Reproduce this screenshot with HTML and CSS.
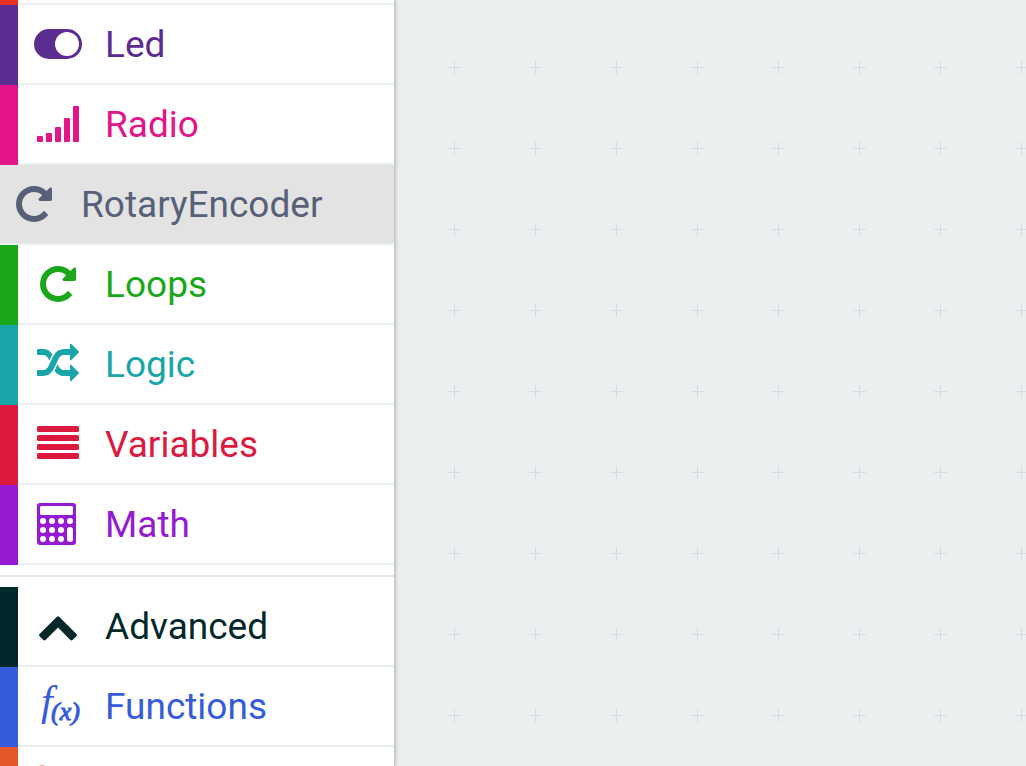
FILE: index.html
```html
<!DOCTYPE html>
<html lang="en">
<head>
  <meta charset="UTF-8">
  <meta name="viewport" content="width=device-width, initial-scale=1.0">
  <title>Block Editor</title>
  <link rel="stylesheet" href="styles.css">
</head>
<body>
  <div id="editor">
    <!-- Toolbox -->
    <nav class="toolbox">
      <div class="row-end input"></div>

      <button type="button" class="category led">
        <svg class="icon wide" viewBox="0 0 48 42"><path fill-rule="evenodd" d="M15 6h18a15 15 0 0 1 0 30H15a15 15 0 0 1 0-30zM33 9a12 12 0 1 0 0 24 12 12 0 0 0 0-24z"/></svg>
        <span>Led</span>
      </button>

      <button type="button" class="category radio">
        <svg class="icon" viewBox="0 0 42 42">
          <rect x="0" y="33" width="6" height="6" rx="1"/>
          <rect x="9" y="30" width="6" height="9" rx="1"/>
          <rect x="18" y="24" width="6" height="15" rx="1"/>
          <rect x="27" y="15" width="6" height="24" rx="1"/>
          <rect x="36" y="3" width="6" height="36" rx="1"/>
        </svg>
        <span>Radio</span>
      </button>

      <button type="button" class="category rotary selected">
        <svg class="icon" viewBox="0 0 1792 1792"><path d="M1664 256v448q0 26-19 45t-45 19h-448q-42 0-59-40-17-39 14-69l138-138q-148-137-349-137-104 0-198.500 40.500t-163.500 109.500-109.500 163.500-40.500 198.500 40.500 198.500 109.500 163.500 163.500 109.500 198.500 40.500q119 0 225-52t179-147q7-10 23-12 15 0 25 9l137 138q9 8 9.500 20.500t-7.500 22.500q-109 132-264 204.500t-327 72.500q-156 0-298-61t-245-164-164-245-61-298 61-298 164-245 245-164 298-61q147 0 284.500 55.500t244.500 156.500l130-129q29-31 70-14 39 17 39 59z"/></svg>
        <span>RotaryEncoder</span>
      </button>

      <button type="button" class="category loops">
        <svg class="icon" viewBox="0 0 1792 1792"><path d="M1664 256v448q0 26-19 45t-45 19h-448q-42 0-59-40-17-39 14-69l138-138q-148-137-349-137-104 0-198.500 40.500t-163.500 109.500-109.500 163.500-40.500 198.500 40.500 198.500 109.500 163.500 163.500 109.500 198.500 40.500q119 0 225-52t179-147q7-10 23-12 15 0 25 9l137 138q9 8 9.500 20.500t-7.500 22.500q-109 132-264 204.500t-327 72.500q-156 0-298-61t-245-164-164-245-61-298 61-298 164-245 245-164 298-61q147 0 284.500 55.500t244.500 156.500l130-129q29-31 70-14 39 17 39 59z"/></svg>
        <span>Loops</span>
      </button>

      <button type="button" class="category logic">
        <svg class="icon" viewBox="0 0 1792 1792"><path d="M666 481q-60 92-137 273-22-45-37-72.500t-40.500-63.500-51-56.500-63-35-81.500-14.500h-224q-14 0-23-9t-9-23v-192q0-14 9-23t23-9h224q250 0 410 225zm1126 799q0 14-9 23l-320 320q-9 9-23 9-13 0-22.500-9.500t-9.500-22.500v-192q-32 0-85 .5t-81 1-73-1-71-5-64-10.500-63-18.500-58-28.500-59-40-55-53.500-56-69.500q59-93 136-273 22 45 37 72.500t40.500 63.500 51 56.500 63 35 81.500 14.500h256v-192q0-14 9-23t23-9q12 0 24 10l319 319q9 9 9 23zm0-896q0 14-9 23l-320 320q-9 9-23 9-13 0-22.500-9.500t-9.500-22.500v-192h-256q-48 0-87 15t-69 45-51 61.500-45 77.500q-32 62-78 171-29 66-49.500 111t-54 105-64 100-74 83-90 68.500-106.500 42-128 16.500h-224q-14 0-23-9t-9-23v-192q0-14 9-23t23-9h224q48 0 87-15t69-45 51-61.500 45-77.500q32-62 78-171 29-66 49.500-111t54-105 64-100 74-83 90-68.500 106.500-42 128-16.500h256v-192q0-14 9-23t23-9q12 0 24 10l319 319q9 9 9 23z"/></svg>
        <span>Logic</span>
      </button>

      <button type="button" class="category variables">
        <svg class="icon" viewBox="0 0 42 42">
          <rect x="0" y="3" width="42" height="6" rx="1.500"/>
          <rect x="0" y="12" width="42" height="6" rx="1.500"/>
          <rect x="0" y="21" width="42" height="6" rx="1.500"/>
          <rect x="0" y="30" width="42" height="6" rx="1.500"/>
        </svg>
        <span>Variables</span>
      </button>

      <button type="button" class="category math">
        <svg class="icon" viewBox="0 0 42 42">
          <rect x="0" y="0" width="39" height="42" rx="3"/>
          <g fill="#fff">
            <rect x="3" y="3" width="33" height="9" rx="1.500"/>
            <circle cx="6" cy="18" r="3"/>
            <circle cx="15" cy="18" r="3"/>
            <circle cx="24" cy="18" r="3"/>
            <circle cx="33" cy="18" r="3"/>
            <circle cx="6" cy="27" r="3"/>
            <circle cx="15" cy="27" r="3"/>
            <circle cx="24" cy="27" r="3"/>
            <circle cx="6" cy="36" r="3"/>
            <circle cx="15" cy="36" r="3"/>
            <circle cx="24" cy="36" r="3"/>
            <rect x="30" y="24" width="6" height="15" rx="3"/>
          </g>
        </svg>
        <span>Math</span>
      </button>

      <hr class="separator">

      <button type="button" class="category advanced">
        <svg class="icon" viewBox="0 0 1792 1792"><path d="M1683 1331l-166 165q-19 19-45 19t-45-19l-531-531-531 531q-19 19-45 19t-45-19l-166-165q-19-19-19-45.500t19-45.500l742-741q19-19 45-19t45 19l742 741q19 19 19 45.500t-19 45.500z"/></svg>
        <span>Advanced</span>
      </button>

      <button type="button" class="category functions">
        <svg class="icon fx" viewBox="0 0 42 42">
          <text class="fx-f" x="4" y="30">f</text>
          <text class="fx-x" x="14" y="35">(x)</text>
        </svg>
        <span>Functions</span>
      </button>

      <div class="row-start arrays">
        <svg class="icon" viewBox="0 0 42 42"><circle cx="5" cy="4" r="4"/></svg>
      </div>
    </nav>

    <!-- Workspace -->
    <main class="workspace">
      <svg class="grid">
        <defs>
          <pattern id="cross" width="81" height="81" x="19" y="27" patternUnits="userSpaceOnUse">
            <path d="M34 40.500h13M40.500 34v13"/>
          </pattern>
        </defs>
        <rect width="100%" height="100%" fill="url(#cross)"/>
      </svg>
    </main>
  </div>
</body>
</html>
```
FILE: styles.css
```css
body {
  font-family: Roboto, sans-serif;
  margin: 0;
  background-color: #ebeff0;
}

#editor {
  display: flex;
  height: 100vh;
  overflow: hidden;
}

/* Toolbox */
.toolbox {
  flex: 0 0 394px;
  display: flex;
  flex-direction: column;
  overflow: hidden;
  background-color: #fff;
  border-right: 1px solid #c3c8ca;
  box-shadow: 0 0 4px rgba(0, 0, 0, 0.3);
  z-index: 1;
}

.category,
.row-end,
.row-start {
  flex: none;
  box-sizing: border-box;
  border: none;
  background: linear-gradient(#eceff0, #eceff0) bottom / 100% 2px no-repeat;
  box-shadow: inset 18px 0 currentColor;
}

.category {
  display: flex;
  align-items: center;
  gap: 23px;
  height: 80px;
  padding: 0 0 2px 34px;
  font-family: inherit;
  font-size: 37px;
  text-align: left;
  cursor: pointer;
}

.category.selected {
  padding-left: 10px;
  background-color: #e3e3e3;
  box-shadow: none;
}

.row-end {
  height: 5px;
}

.row-start {
  flex: 1 0 19px;
  padding: 18px 0 0 34px;
  height: 19px;
  background: none;
  overflow: hidden;
}

.row-start .icon {
  opacity: 0.6;
}

.separator {
  flex: none;
  width: 100%;
  height: 2px;
  margin: 10px 0;
  border: none;
  background-color: #e5e6e7;
}

/* Icons */
.icon {
  width: 42px;
  height: 42px;
  margin: 0 3px;
  fill: currentColor;
}

.icon.wide {
  width: 48px;
  margin: 0;
}

.fx {
  overflow: visible;
  font-family: "Liberation Serif", serif;
  font-style: italic;
}

.fx-f {
  font-size: 42px;
}

.fx-x {
  font-size: 26px;
  stroke: currentColor;
  stroke-width: 1px;
}

/* Category colours */
.input { color: #e63022; }
.led { color: #5c2d91; }
.radio { color: #e3158b; }
.rotary { color: #585f78; }
.loops { color: #1aa81a; }
.logic { color: #1aa5a8; }
.variables { color: #dc1a3f; }
.math { color: #951bd3; }
.advanced { color: #02282b; }
.functions { color: #365bdb; }
.arrays { color: #e6582c; }

/* Workspace */
.workspace {
  flex: 1;
  min-width: 0;
}

.grid {
  display: block;
  width: 100%;
  height: 100%;
}

.grid path {
  stroke: #d6dcdd;
  stroke-width: 1;
}
```
